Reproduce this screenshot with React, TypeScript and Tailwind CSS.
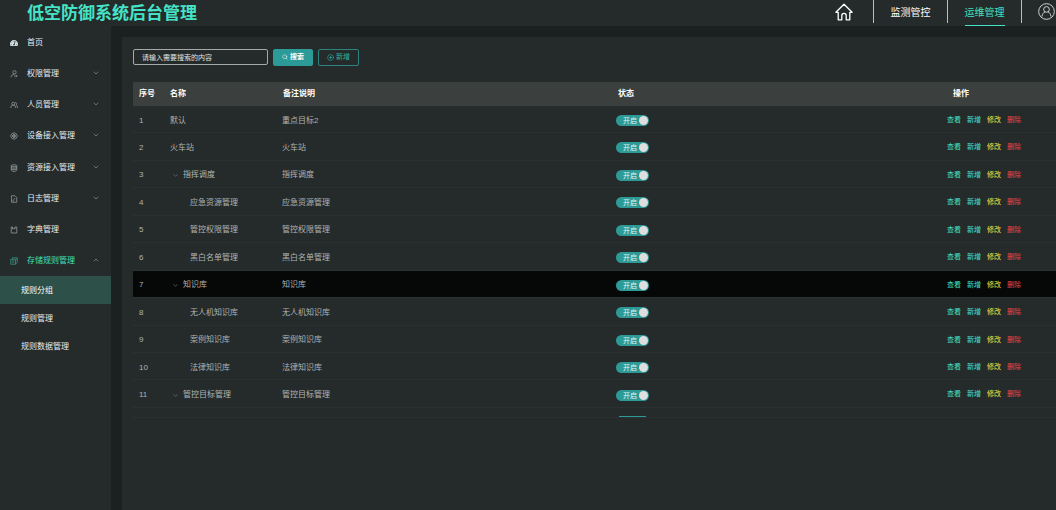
import { useState } from "react";
import type { ReactNode } from "react";
import { FaTachometerAlt } from "react-icons/fa";
import { ChevronDown, ChevronUp, CirclePlus, Search } from "lucide-react";

type MenuEntry = { label: string; icon: ReactNode; expandable: boolean };
type Rule = { name: string; remark: string; level: number; parent?: boolean };

const stroke = {
  viewBox: "0 0 16 16",
  fill: "none",
  stroke: "currentColor",
  strokeWidth: 1.5,
  className: "size-2",
  "aria-hidden": true,
};

const menu: MenuEntry[] = [
  { label: "首页", icon: <FaTachometerAlt className="size-2 text-[#d5dfe6]" aria-hidden />, expandable: false },
  {
    label: "权限管理",
    icon: (
      <svg {...stroke}>
        <circle cx="9" cy="4.500" r="3.300" />
        <path d="M2 14.500c.5-4 3-6 6.500-6M8 12h6M12 9.500l2.500 2.500-2.500 2.500" />
      </svg>
    ),
    expandable: true,
  },
  {
    label: "人员管理",
    icon: (
      <svg {...stroke}>
        <circle cx="6.500" cy="5.500" r="3" />
        <path d="M1.500 14c0-3.500 2-5.500 5-5.500s5 2 5 5.500M10.500 3c3 0 3.500 4 1.500 5.300 2 .7 3 2.700 3 5.700" />
      </svg>
    ),
    expandable: true,
  },
  {
    label: "设备接入管理",
    icon: (
      <svg {...stroke}>
        <path d="M5 2h6l4 6-4 6H5L1 8z" />
        <circle cx="8" cy="8" r="3" />
        <path d="M8 5v6M5 8h6" />
      </svg>
    ),
    expandable: true,
  },
  {
    label: "资源接入管理",
    icon: (
      <svg {...stroke}>
        <ellipse cx="8" cy="3.500" rx="5.500" ry="2" />
        <path d="M2.500 3.500v9c0 3 11 3 11 0v-9M2.500 6.500c0 2.500 11 2.500 11 0M2.500 9.500c0 2.500 11 2.500 11 0" />
      </svg>
    ),
    expandable: true,
  },
  {
    label: "日志管理",
    icon: (
      <svg {...stroke}>
        <path d="M3 1.500h7l3.500 3.500v9.500H3zM5.500 11l5-5M5.500 12h3" />
      </svg>
    ),
    expandable: true,
  },
  {
    label: "字典管理",
    icon: (
      <svg {...stroke}>
        <path d="M2.500 2v12h11V2H10M2.500 2H5v4l2.500-1.500L10 6V2" />
      </svg>
    ),
    expandable: false,
  },
  {
    label: "存储规则管理",
    icon: (
      <svg {...stroke}>
        <path d="M5 1.500h9.500V11L11 14.500H1.500V4.500H11v10M5 1.500v3M4 7.500h4.500M4 10.500h4.500M14.500 4.500H11" />
      </svg>
    ),
    expandable: true,
  },
];

const subMenu = ["规则分组", "规则管理", "规则数据管理"];

const rules: Rule[] = [
  { name: "默认", remark: "重点目标2", level: 0 },
  { name: "火车站", remark: "火车站", level: 0 },
  { name: "指挥调度", remark: "指挥调度", level: 0, parent: true },
  { name: "应急资源管理", remark: "应急资源管理", level: 1 },
  { name: "管控权限管理", remark: "管控权限管理", level: 1 },
  { name: "黑白名单管理", remark: "黑白名单管理", level: 1 },
  { name: "知识库", remark: "知识库", level: 0, parent: true },
  { name: "无人机知识库", remark: "无人机知识库", level: 1 },
  { name: "案例知识库", remark: "案例知识库", level: 1 },
  { name: "法律知识库", remark: "法律知识库", level: 1 },
  { name: "管控目标管理", remark: "管控目标管理", level: 0, parent: true },
];

function Toggle({ label }: { label: string }) {
  const [on, setOn] = useState(true);
  return (
    <label
      className={`relative flex h-[11px] w-[33px] cursor-pointer items-center justify-between rounded-full pr-px pl-[7px] ${on ? "bg-[#2c9a97]" : "bg-[#5b6463]"}`}
    >
      <input type="checkbox" className="sr-only" aria-label={label} checked={on} onChange={() => setOn(!on)} />
      <span className="text-[7px] leading-[11px] text-[#e4f6f5]">{on ? "开启" : "关闭"}</span>
      <span className="size-[9px] rounded-full bg-[#dedede]" />
    </label>
  );
}

function TopBar() {
  return (
    <header className="flex h-[26px] shrink-0 items-center justify-between bg-[#252b2b] pl-[27px]">
      <h1 className="pt-px text-[17px] leading-[26px] font-bold text-[#45e3c6]">低空防御系统后台管理</h1>
      <nav className="flex h-full items-start">
        <a href="#home" aria-label="首页" className="mt-[3px] mr-5 text-white">
          <svg viewBox="0 0 18 18" className="size-[18px]" fill="none" stroke="currentColor" strokeWidth="1.300" strokeLinejoin="round" strokeLinecap="round">
            <path d="M.9 9.300 9 1.200l8.100 8.100h-2.300v7.500h-3.600v-4.300a2.200 2.200 0 0 0-4.400 0v4.300H3.200V9.300z" />
          </svg>
        </a>
        <div className="flex h-[23px] w-[74px] justify-center border-l border-[#b9bdbd]">
          <a href="#monitor" className="h-[26px] text-[10px] leading-[25px] text-white">监测管控</a>
        </div>
        <div className="flex h-[23px] w-[74px] justify-center border-l border-[#b9bdbd]">
          <a href="#ops" className="h-[26px] border-b border-[#45e3c6] text-[10px] leading-[25px] text-[#3fe0c2]">运维管理</a>
        </div>
        <div className="flex h-[23px] border-l border-[#b9bdbd] pt-[3px] pr-px pl-4">
          <button type="button" aria-label="用户" className="h-[17px] text-[#d8dcdc]">
            <svg viewBox="0 0 18 18" className="size-[17px]" fill="none" stroke="currentColor" strokeWidth="1">
              <circle cx="9" cy="9" r="8.300" />
              <circle cx="9" cy="6.800" r="3" />
              <path d="M4.300 14.200c.3-2.900 1.600-4.300 3.200-4.800M13.700 14.200c-.3-2.900-1.600-4.300-3.200-4.800" />
            </svg>
          </button>
        </div>
      </nav>
    </header>
  );
}

function SideBar() {
  const [open, setOpen] = useState(true);
  const [active, setActive] = useState(0);
  return (
    <aside className="w-[111px] shrink-0 bg-[#252b2b] text-[8px] text-[#e6ecf0]">
      <ul className="grid h-[250px] grid-rows-8">
        {menu.map((m, i) => {
          const current = i === menu.length - 1;
          return (
            <li key={m.label}>
              <button
                type="button"
                onClick={current ? () => setOpen(!open) : undefined}
                className={`flex size-full items-center pt-[2px] pr-[11px] pl-[10px] ${current ? "text-[#3fe0bd]" : ""}`}
              >
                <span className={`mr-[9px] ${current ? "text-[#3a9885]" : "text-[#969da0]"}`}>{m.icon}</span>
                <span className="grow text-left">{m.label}</span>
                {m.expandable &&
                  (current && open ? (
                    <ChevronUp className="mb-[2px] size-[8px] text-[#8d9496]" strokeWidth={2} />
                  ) : (
                    <ChevronDown className="mb-[2px] size-[8px] text-[#8d9496]" strokeWidth={2} />
                  ))}
              </button>
            </li>
          );
        })}
      </ul>
      {open && (
        <ul>
          {subMenu.map((s, i) => (
            <li key={s}>
              <button
                type="button"
                onClick={() => setActive(i)}
                className={`block h-7 w-full pt-[2px] pl-[21px] text-left ${i === active ? "bg-[#2d5049] text-white" : ""}`}
              >
                {s}
              </button>
            </li>
          ))}
        </ul>
      )}
    </aside>
  );
}

function RuleTable() {
  const [selected, setSelected] = useState(6);
  return (
    <div className="mt-4 border-b border-[#2b3131]">
      <table className="h-[326px] w-full table-fixed border-collapse text-left text-[8px] text-[#b0b3b2]">
        <colgroup>
          <col className="w-[31px]" />
          <col className="w-[113px]" />
          <col className="w-[335px]" />
          <col className="w-[335px]" />
          <col />
        </colgroup>
        <thead>
          <tr className="h-6 bg-[#3b3f3e] font-bold text-white">
            <th className="pl-[6px]">序号</th>
            <th className="pl-[6px]">名称</th>
            <th className="pl-[6px]">备注说明</th>
            <th className="pl-[6px]">状态</th>
            <th className="pl-[6px]">操作</th>
          </tr>
        </thead>
        <tbody>
          {rules.map((r, i) => (
            <tr
              key={r.name}
              onClick={() => setSelected(i)}
              className={`border-b border-[#2b3131] ${i === selected ? "bg-[#060807]" : ""}`}
            >
              <td className="pt-[3px] pl-[6px]">{i + 1}</td>
              <td className="pt-[3px] pl-[6px]">
                <div className={`flex items-center ${r.level === 1 ? "pl-5" : r.parent ? "gap-1 pl-[2px]" : ""}`}>
                  {r.parent && <ChevronDown className="size-[7px] text-[#7c8281]" strokeWidth={2} />}
                  {r.name}
                </div>
              </td>
              <td className="pt-[3px] pl-[5px]">{r.remark}</td>
              <td className="pt-[3px] pl-1">
                <Toggle label={`${r.name}状态`} />
              </td>
              <td className="pt-[2px]">
                <div className="flex gap-[6px] text-[7px]">
                  <button type="button" className="text-[#45e3c6]">查看</button>
                  <button type="button" className="text-[#45e3c6]">新增</button>
                  <button type="button" className="text-[#ebe84a]">修改</button>
                  <button type="button" className="text-[#ee4446]">删除</button>
                </div>
              </td>
            </tr>
          ))}
        </tbody>
      </table>
      <div className="flex h-[9px] items-end pl-[486px]">
        <span className="h-px w-[27px] bg-[#2c9a97]" />
      </div>
    </div>
  );
}

export default function App() {
  return (
    <div className="flex h-screen flex-col overflow-hidden bg-[#1b2120] font-['Liberation_Sans','Noto_Sans_CJK_SC',sans-serif]">
      <TopBar />
      <div className="flex min-h-0 grow">
        <SideBar />
        <main className="mt-[11px] ml-[11px] min-w-0 grow bg-[#252b2b] pt-[11px] pl-[11px]">
          <form className="flex h-[18px] items-center text-[7px]" onSubmit={(e) => e.preventDefault()}>
            <input
              type="text"
              aria-label="搜索内容"
              placeholder="请输入需要搜索的内容"
              className="h-4 w-[135px] rounded-[2px] border border-[#a5a9a9] px-2 text-white placeholder:text-[#e0e4e4]"
            />
            <button type="submit" className="ml-[5px] flex h-[17px] w-10 items-center justify-center gap-[2px] rounded-[2px] bg-[#2c9a97] font-bold text-white">
              <Search className="size-[6px]" strokeWidth={2} />
              搜索
            </button>
            <button type="button" className="ml-[5px] flex h-[17px] w-[41px] items-center justify-center gap-[2px] rounded-[2px] border border-[#2a8581] text-[#2fb0aa]">
              <CirclePlus className="size-[7px]" strokeWidth={2} />
              新增
            </button>
          </form>
          <RuleTable />
        </main>
      </div>
    </div>
  );
}
